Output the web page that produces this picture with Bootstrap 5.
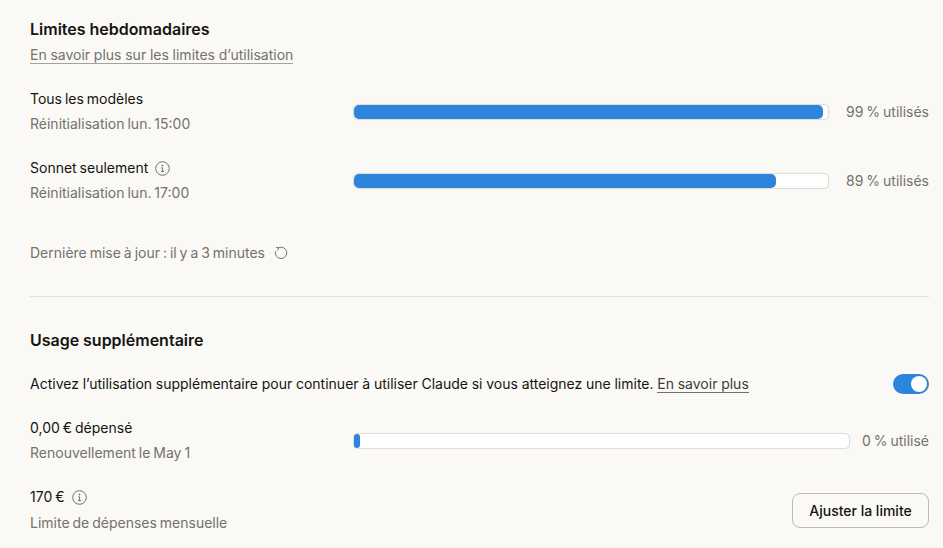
<!DOCTYPE html>
<html lang="fr">
<head>
  <meta charset="UTF-8">
  <title>Limites</title>
  <link href="https://cdn.jsdelivr.net/npm/bootstrap@5.3.0/dist/css/bootstrap.min.css" rel="stylesheet">
  <style>
    html, body { height: 548px; overflow: hidden; }
    body { background: #faf9f5; color: #141413; font-family: Inter, "Liberation Sans", sans-serif; font-size: 14px; line-height: 20px; word-spacing: -0.2px; }
    .usage-page { padding: 19px 14px 0 30px; }
    .section-title { font-size: 16px; font-weight: 600; line-height: 20px; margin: 0; }
    .section-title-gap { margin-top: 33px; }
    .muted-text { color: #73726c; }
    .tight-words { word-spacing: -1px; }
    .learn-link { color: #73726c; text-decoration: none; border-bottom: 1px solid #a3a29c; display: inline-block; line-height: 17px; }
    .dark-link { color: #3d3d3a; text-decoration: none; border-bottom: 1px solid #73726c; line-height: 17px; display: inline-block; }
    .link-line { margin-top: 6px; }
    .usage-row { height: 69px; }
    .first-row { margin-top: 12px; }
    .spend-row { margin-top: 12px; }
    .row-label { width: 323px; flex-shrink: 0; }
    .row-label > div + div { margin-top: 5px; }
    .usage-bar { flex: 1; height: 16px; background: #fff; border: 1px solid #dfddd6; border-radius: 5px; box-shadow: 0 0 1px rgba(0,0,0,.08); }
    .usage-fill { height: 100%; background: #2c84db; border-radius: 5px; min-width: 6px; }
    .usage-value { color: #73726c; margin-left: 17px; white-space: nowrap; word-spacing: -1px; }
    .usage-value-short { margin-left: 12px; }
    .info-icon { margin-left: 7px; }
    .refresh-icon { margin-left: 9px; }
    .update-line { margin-top: 28px; }
    .page-rule { border-top: 1px solid #e0dfd8; opacity: 1; margin: 33px 0 0; }
    .extra-line { margin-top: 24px; }
    .limit-line { margin-top: 12px; }
    .limit-note { margin-top: 6px; }
    .switch-track { width: 36px; height: 20px; background: #2c84db; border-radius: 10px; padding: 2px; display: flex; justify-content: flex-end; }
    .switch-knob { width: 16px; height: 16px; background: #fff; border-radius: 50%; }
    .limit-btn { width: 137px; height: 35px; padding: 0; background: #faf9f5; border: 1px solid #bcbab3; border-radius: 8px; color: #141413; font-size: 14px; font-weight: 500; }
    .limit-btn:hover { background: #f0eee6; border-color: #bcbab3; }
  </style>
</head>
<body>
  <main class="usage-page">
    <h2 class="section-title">Limites hebdomadaires</h2>
    <div class="link-line"><a href="#" class="learn-link">En savoir plus sur les limites d’utilisation</a></div>

    <div class="usage-row first-row d-flex align-items-center">
      <div class="row-label tight-words">
        <div>Tous les modèles</div>
        <div class="muted-text">Réinitialisation lun. 15:00</div>
      </div>
      <div class="usage-bar"><div class="usage-fill" style="width:99%"></div></div>
      <div class="usage-value">99 % utilisés</div>
    </div>

    <div class="usage-row d-flex align-items-center">
      <div class="row-label tight-words">
        <div class="d-flex align-items-center">Sonnet seulement
          <svg class="info-icon" width="15" height="15" viewBox="0 0 15 15" fill="none" stroke="#73726c"><circle cx="7.5" cy="7.5" r="6.8"/><path d="M6.3 6.8h1.3v3.6M6 10.5h3.1"/><circle cx="7.4" cy="4.5" r=".5" fill="#73726c"/></svg>
        </div>
        <div class="muted-text">Réinitialisation lun. 17:00</div>
      </div>
      <div class="usage-bar"><div class="usage-fill" style="width:89%"></div></div>
      <div class="usage-value">89 % utilisés</div>
    </div>

    <div class="update-line muted-text tight-words d-flex align-items-center">Dernière mise à jour : il y a 3 minutes
      <svg class="refresh-icon" width="14" height="14" viewBox="0 0 14 14" fill="none" stroke="#73726c" stroke-width="1"><path d="M4.4 1.8A5.7 5.7 0 1 1 1.6 5.2"/><path d="M1.9 1.2l2.5.6-.6 2.6"/></svg>
    </div>

    <hr class="page-rule">

    <h2 class="section-title section-title-gap">Usage supplémentaire</h2>

    <div class="extra-line d-flex align-items-center justify-content-between">
      <div>Activez l’utilisation supplémentaire pour continuer à utiliser Claude si vous atteignez une limite. <a href="#" class="dark-link">En savoir plus</a></div>
      <div class="switch-track"><div class="switch-knob"></div></div>
    </div>

    <div class="usage-row spend-row d-flex align-items-center">
      <div class="row-label tight-words">
        <div>0,00 € dépensé</div>
        <div class="muted-text">Renouvellement le May 1</div>
      </div>
      <div class="usage-bar"><div class="usage-fill" style="width:1%"></div></div>
      <div class="usage-value usage-value-short">0 % utilisé</div>
    </div>

    <div class="limit-line tight-words d-flex align-items-center justify-content-between">
      <div>
        <div class="d-flex align-items-center">170 €
          <svg class="info-icon" width="15" height="15" viewBox="0 0 15 15" fill="none" stroke="#73726c"><circle cx="7.5" cy="7.5" r="6.8"/><path d="M6.3 6.8h1.3v3.6M6 10.5h3.1"/><circle cx="7.4" cy="4.5" r=".5" fill="#73726c"/></svg>
        </div>
        <div class="limit-note muted-text">Limite de dépenses mensuelle</div>
      </div>
      <button type="button" class="btn limit-btn">Ajuster la limite</button>
    </div>
  </main>
</body>
</html>
